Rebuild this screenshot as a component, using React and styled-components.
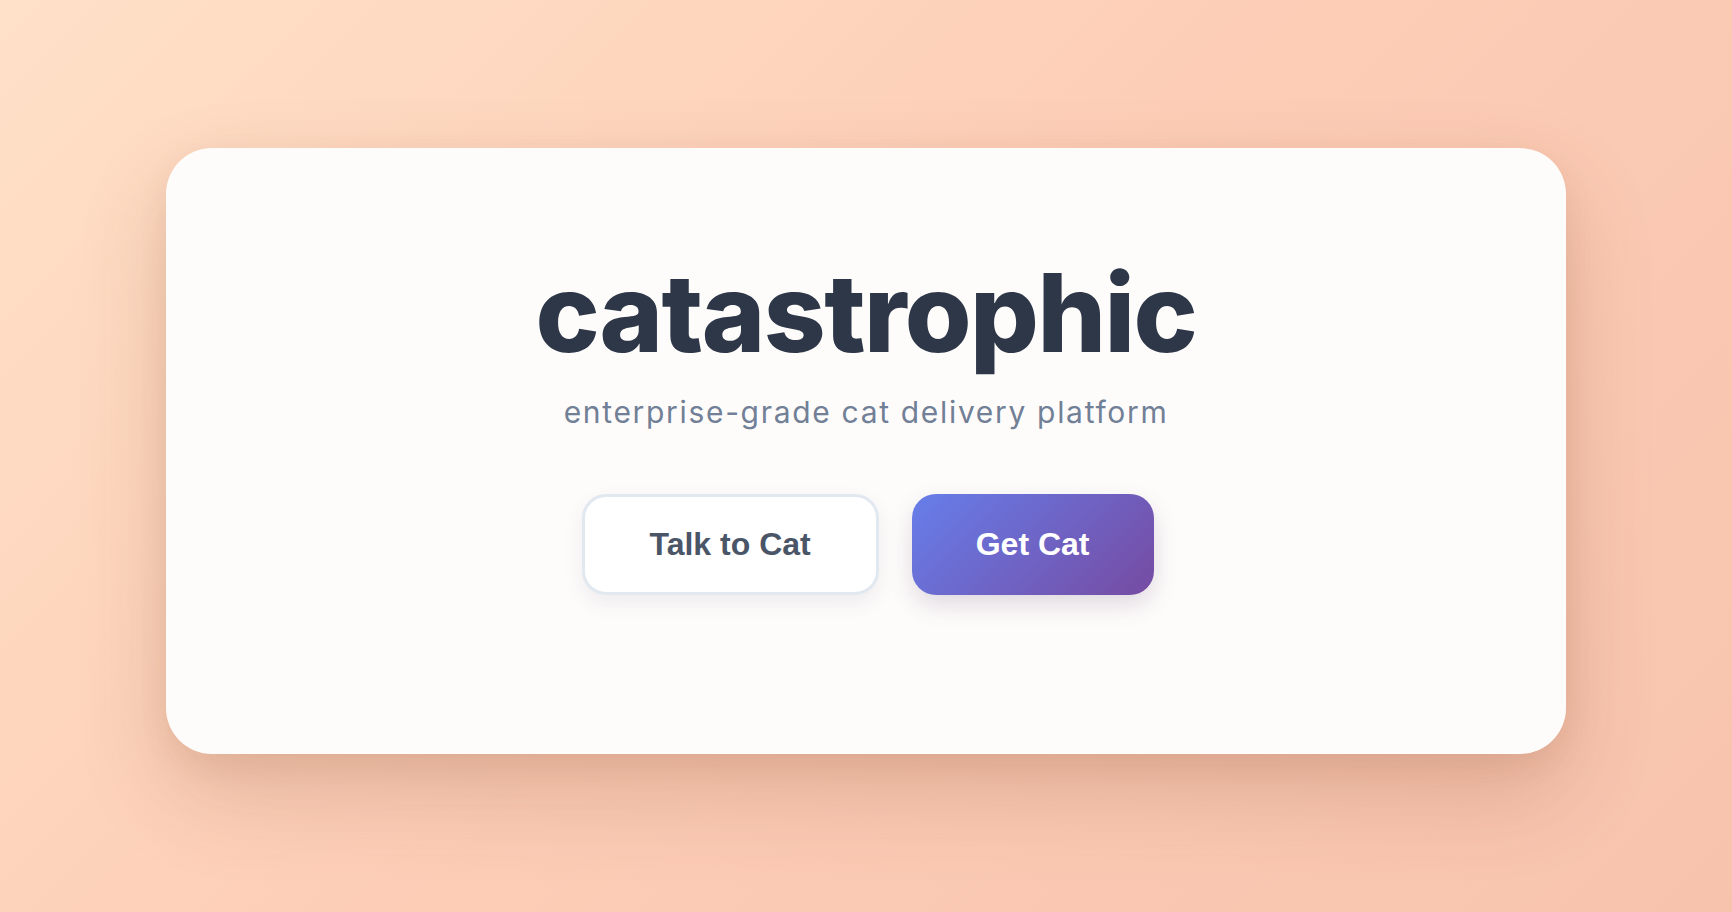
import React from "react"
import styled, { createGlobalStyle } from "styled-components"

const GlobalStyle = createGlobalStyle`
  html, body {
    margin: 0;
    padding: 0;
  }
  body {
    min-height: 100vh;
    background: linear-gradient(135deg, #ffe0c8 0%, #fdcdb6 50%, #f7c3ad 100%);
    font-family: Inter, "Noto Sans", sans-serif;
  }
`

const Page = styled.div`
  min-height: 100vh;
  box-sizing: border-box;
  padding: 148px 166px 0;
`

const Card = styled.main`
  max-width: 1400px;
  margin: 0 auto;
  box-sizing: border-box;
  padding: 111px 40px 159px;
  background: #fefcfb;
  border-radius: 46px;
  box-shadow: 0 40px 90px rgba(120, 60, 30, 0.2), 0 10px 30px rgba(120, 60, 30, 0.08);
  display: flex;
  flex-direction: column;
  align-items: center;
`

const Title = styled.h1`
  margin: 0;
  font-family: Inter, "Noto Sans", sans-serif;
  font-size: 108px;
  font-weight: 800;
  line-height: 108px;
  letter-spacing: -0.014em;
  color: #2d3748;
`

const Tagline = styled.p`
  margin: 27px 0 0;
  font-family: Inter, "Noto Sans", sans-serif;
  font-size: 30px;
  line-height: 36px;
  letter-spacing: 0.056em;
  color: #718096;
`

const Actions = styled.div`
  margin-top: 64px;
  margin-left: 3px;
  display: flex;
  gap: 33px;
`

const Button = styled.button`
  font-family: "Liberation Sans", Arial, sans-serif;
  font-size: 32px;
  font-weight: 700;
  line-height: 37px;
  padding: ${(p) => (p.$primary ? "29px 64px" : "29px 65px")};
  border-radius: 24px;
  cursor: pointer;
  border: ${(p) => (p.$primary ? "none" : "3px solid #e2e8f0")};
  background: ${(p) => (p.$primary ? "linear-gradient(135deg, #667eea 0%, #764ba2 100%)" : "#ffffff")};
  color: ${(p) => (p.$primary ? "#ffffff" : "#4a5568")};
  box-shadow: ${(p) =>
    p.$primary ? "0 10px 24px rgba(60, 40, 90, 0.16)" : "0 8px 20px rgba(40, 40, 60, 0.08)"};
`

export default function App() {
  return (
    <Page>
      <GlobalStyle />
      <Card>
        <Title>catastrophic</Title>
        <Tagline>enterprise-grade cat delivery platform</Tagline>
        <Actions>
          <Button>Talk to Cat</Button>
          <Button $primary>Get Cat</Button>
        </Actions>
      </Card>
    </Page>
  )
}
